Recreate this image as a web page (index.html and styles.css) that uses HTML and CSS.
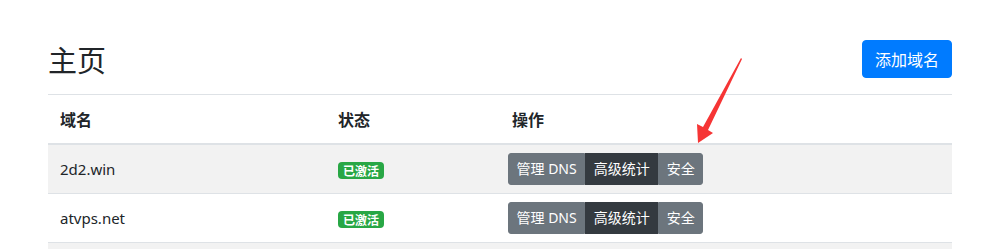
FILE: index.html
```html
<!DOCTYPE html>
<html lang="zh-CN">
<head>
    <meta charset="UTF-8">
    <meta name="viewport" content="width=device-width, initial-scale=1.0">
    <title>主页</title>
    <link rel="stylesheet" href="styles.css">
</head>
<body>
    <div class="container">
        <div class="header">
            <h2>主页</h2>
            <button type="button" class="btn btn-primary">添加域名</button>
        </div>

        <!-- 域名列表 -->
        <table class="table">
            <colgroup>
                <col class="col-domain">
                <col class="col-status">
                <col>
            </colgroup>
            <thead>
                <tr>
                    <th>域名</th>
                    <th>状态</th>
                    <th>操作</th>
                </tr>
            </thead>
            <tbody>
                <tr>
                    <td>2d2.win</td>
                    <td><span class="badge">已激活</span></td>
                    <td>
                        <div class="btn-group">
                            <button type="button" class="btn-sm btn-secondary">管理 DNS</button>
                            <button type="button" class="btn-sm btn-dark">高级统计</button>
                            <button type="button" class="btn-sm btn-secondary">安全</button>
                        </div>
                    </td>
                </tr>
                <tr>
                    <td>atvps.net</td>
                    <td><span class="badge">已激活</span></td>
                    <td>
                        <div class="btn-group">
                            <button type="button" class="btn-sm btn-secondary">管理 DNS</button>
                            <button type="button" class="btn-sm btn-dark">高级统计</button>
                            <button type="button" class="btn-sm btn-secondary">安全</button>
                        </div>
                    </td>
                </tr>
                <tr>
                    <td>&nbsp;</td>
                    <td></td>
                    <td></td>
                </tr>
            </tbody>
        </table>
    </div>

    <!-- 标注箭头 -->
    <svg class="arrow" width="992" height="249" viewBox="0 0 992 249">
        <polygon points="742,59 708,130 713,133 698,143 697,124 703,127 741,58" fill="#f63535"/>
    </svg>
</body>
</html>
```

FILE: styles.css
```css
/* 基本样式 */
* {
    margin: 0;
    padding: 0;
    box-sizing: border-box;
}

body {
    font-family: "Noto Sans", "Noto Sans CJK SC", sans-serif;
    font-size: 15px;
    color: #212529;
    background-color: #fff;
    overflow: hidden;
}

.container {
    padding: 40px 40px 0 48px;
}

.header {
    display: flex;
    justify-content: space-between;
    align-items: center;
    margin-bottom: 16px;
}

h2 {
    font-family: "Noto Sans CJK SC", sans-serif;
    font-size: 29px;
    font-weight: 400;
    line-height: 38px;
}

.btn {
    font-family: "Noto Sans CJK SC", sans-serif;
    font-size: 16px;
    line-height: 24px;
    padding: 6px 12px;
    border: 1px solid transparent;
    border-radius: 4px;
    cursor: pointer;
}

.btn-primary {
    background-color: #007bff;
    border-color: #007bff;
    color: #fff;
}

.table {
    width: 100%;
    border-collapse: collapse;
    table-layout: fixed;
}

.col-domain {
    width: 278px;
}

.col-status {
    width: 174px;
}

th {
    font-family: "Noto Sans CJK SC", sans-serif;
    font-size: 16px;
    font-weight: 700;
    line-height: 24px;
    text-align: left;
    padding: 12px;
    border-top: 1px solid #dee2e6;
    border-bottom: 2px solid #dee2e6;
}

td {
    height: 49px;
    padding: 0 12px;
    line-height: 20px;
    vertical-align: middle;
    border-bottom: 1px solid #dee2e6;
}

tbody tr:nth-child(odd) {
    background-color: #f2f2f2;
}

.badge {
    display: inline-block;
    font-family: "Noto Sans CJK SC", sans-serif;
    font-size: 12px;
    font-weight: 700;
    line-height: 11px;
    padding: 3px 5px;
    border-radius: 4px;
    background-color: #28a745;
    color: #fff;
    vertical-align: middle;
}

.btn-group {
    display: flex;
    width: fit-content;
    margin-left: -4px;
}

.btn-sm {
    font-family: "Noto Sans", "Noto Sans CJK SC", sans-serif;
    font-size: 14px;
    line-height: 22px;
    padding: 4px 7.5px;
    border: 1px solid transparent;
    color: #fff;
    cursor: pointer;
}

.btn-sm:first-child {
    border-radius: 3px 0 0 3px;
}

.btn-sm:last-child {
    border-radius: 0 3px 3px 0;
}

.btn-secondary {
    background-color: #6c757d;
    border-color: #6c757d;
}

.btn-dark {
    background-color: #343a40;
    border-color: #343a40;
}

.arrow {
    position: absolute;
    top: 0;
    left: 0;
    pointer-events: none;
}
```
